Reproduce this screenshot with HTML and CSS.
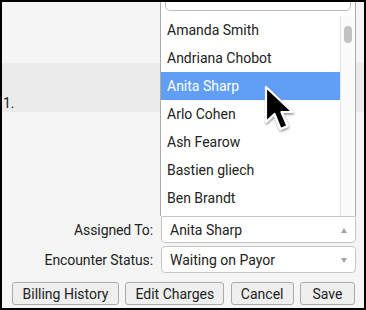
FILE: index.html
```html
<!DOCTYPE html>
<html>
<head>
<meta charset="utf-8">
<link rel="stylesheet" href="styles.css">
</head>
<body>
<div class="frame">
  <div class="band"><span class="num">1.</span></div>
  <div class="spacer"></div>
  <div class="fields">
    <label class="label">Assigned To:</label>
    <div class="select open"><span>Anita Sharp</span><i class="tri up"></i></div>
    <label class="label">Encounter Status:</label>
    <div class="select"><span>Waiting on Payor</span><i class="tri down"></i></div>
  </div>
  <div class="buttons">
    <button class="btn">Billing History</button>
    <button class="btn">Edit Charges</button>
    <button class="btn">Cancel</button>
    <button class="btn">Save</button>
  </div>

  <div class="popup">
    <div class="search"></div>
    <div class="list">
      <ul class="items">
        <li>Amanda Smith</li>
        <li>Andriana Chobot</li>
        <li class="active">Anita Sharp</li>
        <li>Arlo Cohen</li>
        <li>Ash Fearow</li>
        <li>Bastien gliech</li>
        <li>Ben Brandt</li>
      </ul>
      <div class="track"><div class="thumb"></div></div>
    </div>
  </div>

  <svg class="cursor" width="32" height="52" viewBox="0 0 32 52">
    <defs>
      <filter id="sh" x="-30%" y="-30%" width="160%" height="160%">
        <feDropShadow dx="0.5" dy="1.5" stdDeviation="1.2" flood-color="#000" flood-opacity="0.45"/>
      </filter>
    </defs>
    <path d="M2 2 L2 37 L10.5 29 L16.5 44 L23.5 41 L17.5 27 L28.5 27 Z" fill="#000" stroke="#fff" stroke-width="2.2" stroke-linejoin="round" filter="url(#sh)"/>
  </svg>
</div>
</body>
</html>
```

FILE: styles.css
```css
html, body {
  margin: 0;
  padding: 0;
}
body {
  font-family: Roboto, "Liberation Sans", sans-serif;
  font-size: 14px;
  color: #222;
}
.frame {
  position: relative;
  box-sizing: border-box;
  width: 366px;
  height: 310px;
  border: 2px solid #000;
  background: #f5f5f5;
  display: flex;
  flex-direction: column;
  overflow: hidden;
}
.band {
  margin-top: 61px;
  height: 49px;
  background: #ebebeb;
  display: flex;
  align-items: flex-end;
  padding: 0 0 1px 1px;
  box-sizing: border-box;
}
.num {
  line-height: 16px;
}
.spacer {
  flex: 1;
}
.fields {
  display: grid;
  grid-template-columns: 151px 195px;
  column-gap: 8px;
  row-gap: 3px;
  padding-right: 8px;
}
.label {
  text-align: right;
  align-self: center;
  line-height: 16px;
  letter-spacing: -0.1px;
}
.select {
  position: relative;
  box-sizing: border-box;
  height: 27px;
  background: #fff;
  border: 1px solid #c6c6c6;
  border-radius: 4px;
  display: flex;
  align-items: center;
  padding-left: 8px;
}
.select.open {
  border-top-left-radius: 0;
  border-top-right-radius: 0;
}
.tri {
  position: absolute;
  right: 8px;
  top: 11px;
  width: 0;
  height: 0;
  border-left: 3.5px solid transparent;
  border-right: 3.5px solid transparent;
}
.tri.up {
  border-bottom: 5px solid #a3a3a3;
}
.tri.down {
  border-top: 5px solid #a3a3a3;
}
.buttons {
  display: flex;
  justify-content: space-between;
  margin-top: 9px;
  padding: 0 9px 3px 10px;
}
.btn {
  box-sizing: border-box;
  height: 23px;
  padding: 0;
  font-family: Roboto, "Liberation Sans", sans-serif;
  font-size: 14px;
  color: #222;
  background: #efefef;
  border: 1px solid #ababab;
  border-radius: 3px;
}
.btn:nth-child(1) { width: 107px; }
.btn:nth-child(2) { width: 99px; }
.btn:nth-child(3) { width: 63px; }
.btn:nth-child(4) { width: 55px; }
.popup {
  position: absolute;
  left: 158px;
  top: -24px;
  width: 196px;
  box-sizing: border-box;
  background: #fff;
  border: 1px solid #aaa;
  border-bottom: none;
  padding-top: 4px;
  z-index: 2;
}
.search {
  height: 28px;
  box-sizing: border-box;
  margin: 0 4px 5px 4px;
  border: 1px solid #bdbdbd;
  border-radius: 5px;
}
.list {
  display: flex;
  height: 200px;
}
.items {
  list-style: none;
  margin: 0;
  padding: 0;
  flex: 1;
}
.items li {
  height: 28px;
  line-height: 28px;
  padding-left: 6px;
}
.items li.active {
  background: #619ff7;
  color: #fff;
}
.track {
  width: 15px;
  box-sizing: border-box;
  border-left: 1px solid #e6e6e6;
  background: #fbfbfb;
  padding: 10px 0 0 3px;
}
.thumb {
  width: 8px;
  height: 17px;
  border-radius: 4px;
  background: #c2c2c2;
}
.cursor {
  position: absolute;
  left: 262px;
  top: 83px;
  z-index: 3;
}
```
